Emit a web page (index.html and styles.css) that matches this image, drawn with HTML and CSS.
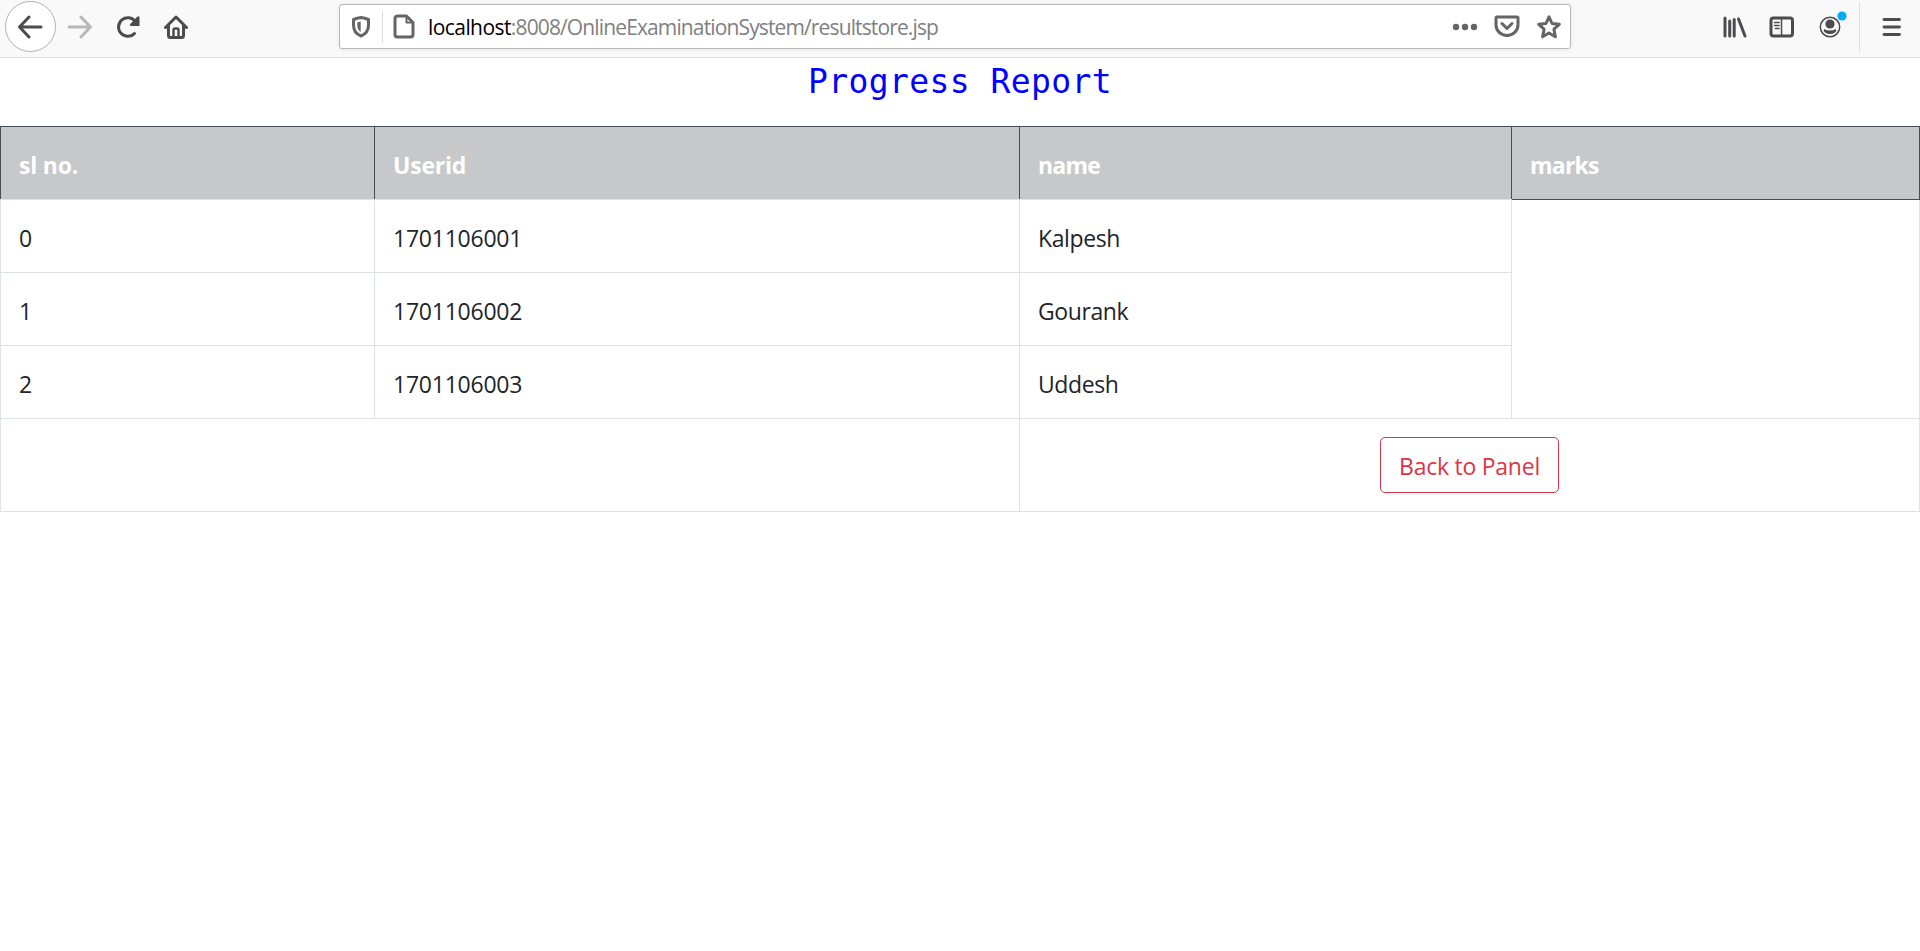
FILE: index.html
```html
<!DOCTYPE html>
<html lang="en">
<head>
<meta charset="utf-8">
<title>Progress Report</title>
<link rel="stylesheet" href="styles.css">
</head>
<body>
<header class="toolbar">
  <nav class="nav">
    <span class="back"><svg width="26" height="24" viewBox="0 0 26 24"><path d="M24 12H3M12 2L2.500 12L12 22"/></svg></span>
    <svg class="forward" width="26" height="24" viewBox="0 0 26 24"><path d="M2 12H23M14 2L23.500 12L14 22"/></svg>
    <svg class="reload" width="26" height="24" viewBox="0 0 26 24"><path d="M18.500 18.500A9.300 9.300 0 1 1 19.300 6.500"/><path class="solid" d="M20.500 2.500Q23 0 23.500 2.500V11H15Q13 10.500 14.500 8.800Z"/></svg>
    <svg class="home" width="26" height="26" viewBox="0 0 26 26"><path d="M2.500 13.500L13 3L23.500 13.500M5.500 12V21.500Q5.500 23.500 7.500 23.500H18.500Q20.500 23.500 20.500 21.500V12"/><path class="door" d="M10.500 23V16Q10.500 14.500 12 14.500H14Q15.500 14.500 15.500 16V23"/></svg>
  </nav>
  <div class="address">
    <svg class="shield" width="20" height="22" viewBox="0 0 20 22"><path d="M10 1.600Q14 2 17.500 3.500V9Q17.500 17 10 20Q2.500 17 2.500 9V3.500Q6 2 10 1.600Z"/><path class="solid" d="M9.700 5.500V16Q6.300 13.500 6.300 9V6.200Z"/></svg>
    <span class="split"></span>
    <svg class="page" width="22" height="25" viewBox="0 0 22 25"><path d="M5 2H13.500L20 8.500V20.500Q20 23 17.500 23H4.500Q2 23 2 20.500V4.500Q2 2 5 2Z"/><path class="fold" d="M13.500 2V8.500H20"/></svg>
    <span class="url"><b>localhost</b><span>:8008/OnlineExaminationSystem/resultstore.jsp</span></span>
    <svg class="dots" width="26" height="8" viewBox="0 0 26 8"><circle cx="4" cy="4" r="3.200"/><circle cx="13" cy="4" r="3.200"/><circle cx="22" cy="4" r="3.200"/></svg>
    <svg class="pocket" width="26" height="23" viewBox="0 0 26 23"><path d="M3 2H23Q24 2 24 3V10A11 10.500 0 0 1 2 10V3Q2 2 3 2Z"/><path d="M8 8.500L13 13.500L18 8.500"/></svg>
    <svg class="star" width="26" height="26" viewBox="0 0 26 26"><path d="M13 2.800L16 9.500L23.300 10.300L17.900 15.200L19.400 22.800L13 19L6.600 22.800L8.100 15.200L2.700 10.300L10 9.500Z"/></svg>
  </div>
  <div class="tools">
    <svg class="library" width="26" height="24" viewBox="0 0 26 24"><path d="M3 3V21M7.700 6V21M12.200 4.500V21M16.500 4L23 21"/></svg>
    <svg class="sidebar" width="26" height="24" viewBox="0 0 26 24"><rect x="2" y="3" width="21.500" height="18" rx="2.500"/><path class="thin" d="M12.500 3V21M5.500 7.500H10M5.500 10.500H10M6.500 13.500H10"/></svg>
    <svg class="account" width="30" height="30" viewBox="0 0 30 30"><circle class="ring" cx="12" cy="18" r="9.700"/><circle class="solid" cx="12" cy="15" r="4.600"/><path class="solid" d="M6 20Q12 23 18 20Q19 22 17 23.500Q12 26.500 7 23.500Q5 22 6 20Z"/><circle class="notice" cx="24" cy="7" r="4.600"/></svg>
    <span class="divider"></span>
    <svg class="menu" width="20" height="20" viewBox="0 0 20 20"><path d="M2 2.500H17.500M2 10H17.500M2 17.500H17.500"/></svg>
  </div>
</header>
<main>
  <h1 class="title">Progress Report</h1>
  <table class="report">
    <colgroup><col class="c1"><col class="c2"><col class="c3"><col class="c4"></colgroup>
    <thead><tr><th>sl no.</th><th>Userid</th><th class="tight">name</th><th class="tight last">marks</th></tr></thead>
    <tbody>
      <tr><td>0</td><td class="id">1701106001</td><td class="name">Kalpesh</td><td rowspan="3"></td></tr>
      <tr><td>1</td><td class="id">1701106002</td><td class="name">Gourank</td></tr>
      <tr><td>2</td><td class="id">1701106003</td><td class="name">Uddesh</td></tr>
      <tr class="actions"><td colspan="2"></td><td class="action" colspan="2"><a class="button">Back to Panel</a></td></tr>
    </tbody>
  </table>
</main>
</body>
</html>
```
FILE: styles.css
```css
* { box-sizing: border-box; }
body { margin: 0; height: 951px; overflow: hidden; background: #fff; color: #212529; font-family: "Open Sans", "Noto Sans", sans-serif; }
svg { display: block; flex: none; fill: none; stroke: #4c4c4e; stroke-width: 3; stroke-linecap: round; stroke-linejoin: round; }
.toolbar { display: flex; height: 58px; background: #f9f9fa; border-bottom: 1px solid #dedede; }
.nav { display: flex; width: 339px; height: 53px; align-items: center; padding-left: 5px; }
.back { display: flex; width: 51px; height: 51px; align-items: center; justify-content: center; border: 1px solid #b1b1b1; border-radius: 50%; background: #fff; }
.back svg { margin-left: -1px; }
.forward { margin-left: 11px; stroke: #b8b8b9; }
.reload { margin-left: 23px; }
.solid { fill: #4c4c4e; stroke: none; }
.home { margin-left: 21px; }
.door { stroke-width: 2.500; }
.address { display: flex; width: 1232px; height: 45px; margin-top: 4px; align-items: center; padding-left: 11px; border: 1px solid #b8b8b8; border-radius: 3px; background: #fff; box-shadow: 0 1px 5px rgba(0,0,0,.08); }
.address svg { stroke: #656566; }
.address .solid { fill: #656566; stroke: none; }
.split { width: 1px; height: 32px; margin: 0 10px 0 11px; background: #dedede; }
.page .fold { stroke-width: 2; }
.url { width: 1028px; margin-left: 13px; padding-top: 1px; color: #808080; font-size: 21px; line-height: 30px; letter-spacing: -.87px; white-space: nowrap; }
.url b { color: #000; font-weight: 400; letter-spacing: -.57px; }
.address .dots { fill: #656566; stroke: none; margin-left: -4px; }
.pocket { margin-left: 16px; }
.star { margin-left: 16px; }
.tools { display: flex; height: 54px; align-items: center; padding-left: 151px; }
.sidebar { margin-left: 21px; }
.sidebar .thin { stroke-width: 1.500; }
.account { margin: -6px 0 0 23px; }
.account .ring { stroke-width: 1.500; }
.account .notice { fill: #00adf5; stroke: none; }
.divider { width: 1px; height: 51px; margin: 0 22px 0 11px; background: #dedede; }
.menu { stroke-width: 2.800; }
.title { height: 68px; margin: 0; color: #00f; font: 400 33px/47px "DejaVu Sans Mono", monospace; letter-spacing: .4px; text-align: center; }
.report { width: 1919px; border-collapse: collapse; table-layout: fixed; font-size: 23px; line-height: 36px; }
.c1 { width: 374px; } .c2 { width: 645px; } .c3 { width: 492px; } .c4 { width: 408px; }
.report tr { height: 73px; }
.report td, .report th { padding: 3px 18px 0; border: 1px solid #dee2e6; text-align: left; vertical-align: middle; }
.report th { color: #fff; background: #c7c8ca; border-color: #454d55; border-bottom-color: #dee2e6; font-weight: 700; letter-spacing: -.2px; }
.report th.last { border-bottom-color: #454d55; }
.report th.tight { letter-spacing: -.8px; }
.report .id { letter-spacing: -.24px; }
.report .name { letter-spacing: -.4px; }
.report .actions { height: 93px; }
.report .action { padding: 0; text-align: center; }
.button { display: inline-block; width: 179px; height: 56px; border: 1px solid #dc3545; border-radius: 5px; color: #dc3545; line-height: 57px; letter-spacing: -.25px; white-space: nowrap; vertical-align: middle; }
```
